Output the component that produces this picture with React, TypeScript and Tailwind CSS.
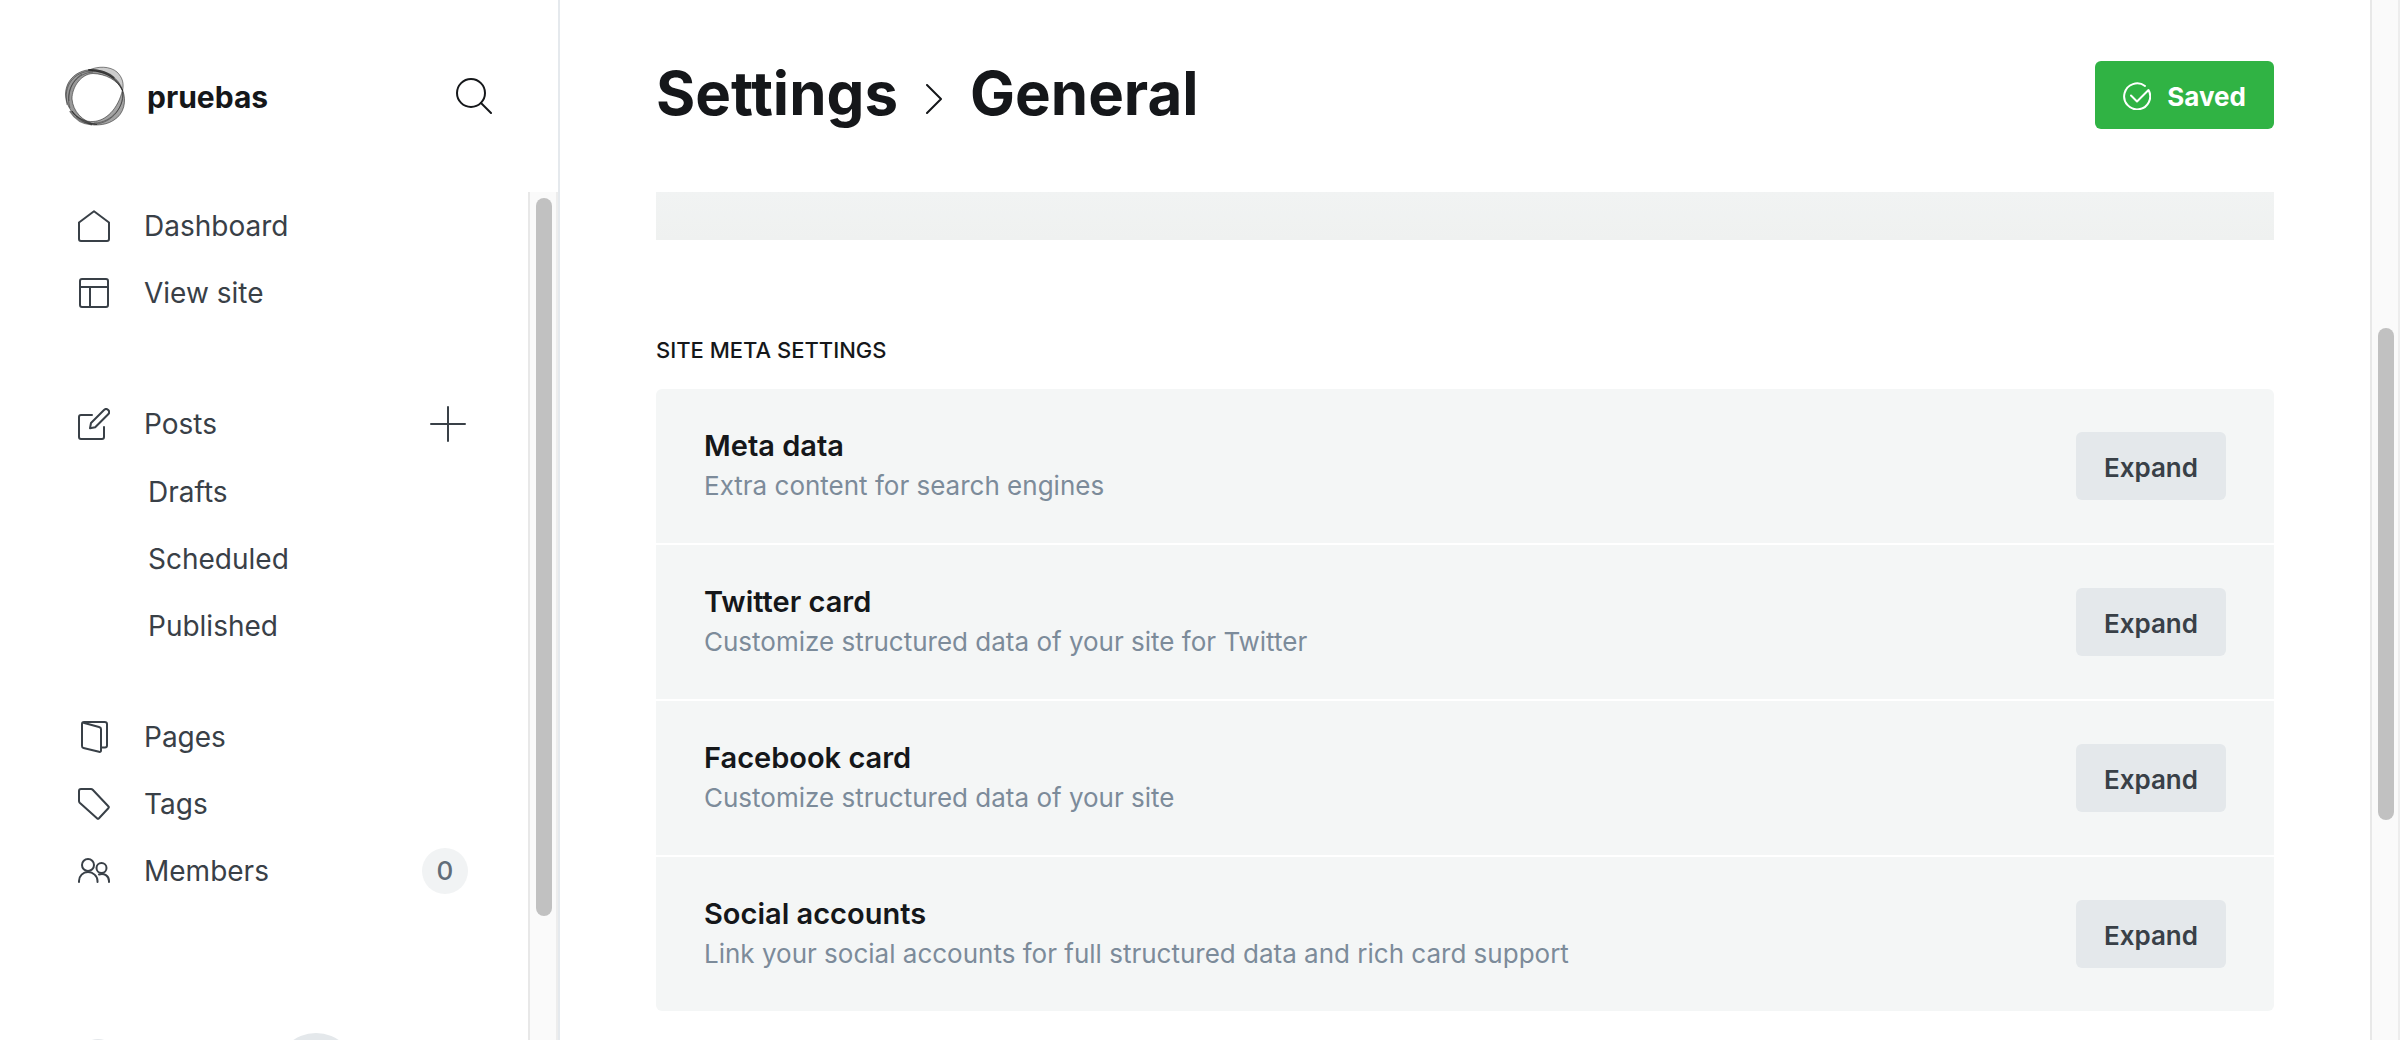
import type { ReactNode } from "react";

function Icon({ children, className = "size-8", box = 32 }: { children: ReactNode; className?: string; box?: number }) {
  return (
    <svg
      viewBox={`0 0 ${box} ${box}`}
      className={`shrink-0 ${className}`}
      fill="none"
      stroke="currentColor"
      strokeWidth="2"
      strokeLinecap="round"
      strokeLinejoin="round"
      aria-hidden="true"
    >
      {children}
    </svg>
  );
}

const icons = {
  house: <path d="M1 12.5 16 1.2l15 11.3V29a2 2 0 0 1-2 2H3a2 2 0 0 1-2-2z" />,
  layout: (
    <>
      <rect x="2" y="2" width="28" height="28" rx="2" />
      <path d="M2 10h28M12 10v20" />
    </>
  ),
  pencil: (
    <>
      <path d="M14 7H3a2 2 0 0 0-2 2v20a2 2 0 0 0 2 2h21a2 2 0 0 0 2-2V19" />
      <path d="M12 20.200l1-5.200L26 2a2.900 2.900 0 0 1 4.200 4.200l-13 13z" />
    </>
  ),
  pages: (
    <path d="M4.500 1.500 21 6q2 .5 2 2v21.500q0 1.800-2 1.300L5.500 27Q4 26.600 4 25V3q0-2 2-2h20.500Q29 1 29 3v21.500q0 2-2 2h-4" />
  ),
  tag: <path d="M3 1h10q1 0 1.700.7L30.300 18.300q1 1 0 2L21 30.300q-1 1-2 0L1.700 14.700Q1 14 1 13V3q0-2 2-2z" />,
  members: (
    <>
      <circle cx="10" cy="10" r="6" />
      <circle cx="23.500" cy="13" r="5" />
      <path d="M1 27v-1c0-5 4-9 9-9s9.500 4 9.500 9v1M21 19.500c5-2 10 1.500 10 6.500v1" />
    </>
  ),
};

function Logo() {
  return (
    <svg viewBox="0 0 62 62" className="size-[62px] shrink-0" fill="none" aria-hidden="true">
      <g fill="#333" stroke="#222" strokeOpacity="0.55" strokeWidth="1">
        <path
          fillOpacity="0.5"
          d="M33 59.500C16 58 2 46 1.500 29 2 14 14 4.500 29 4.500c13 .5 26 8.500 29.500 20.500C53 15 42 9 29 8.500 17 9 8 22 8 34c1 12 10 23 25 25.500z"
        />
        <path fillOpacity="0.25" d="M25 5c9-4 21-4 28 2 6 6 7 12 5.500 19C55 15 44 7 25 5z" />
        <path
          fillOpacity="0.45"
          d="M58.500 25C63 36 60 49 50 55c-6 4-12 5-20 5C22 59 12 54 8 46c6 8 14 11 21 10.500C42 56 54 44 58.500 25z"
        />
      </g>
      <g stroke="#222" strokeOpacity="0.45" strokeWidth="1">
        <path d="M3 40C-1 20 10 7 27 6c12 0 24 5 31 19" />
        <path d="M5 36C4 20 14 8 29 7" />
        <path d="M6 43C2 30 6 17 18 9" />
        <path d="M58.500 25C62 40 48 58 30 58" />
        <path d="M58.500 27C60 44 46 60 28 59" />
      </g>
      <path stroke="#222" strokeOpacity="0.6" strokeWidth="2" d="M24 5c12 0 20 2 26 8M6 46c5 8 12 13 22 13.500" />
    </svg>
  );
}

function NavItem({ icon, label, children }: { icon: ReactNode; label: string; children?: ReactNode }) {
  return (
    <div className="flex h-[67px] items-center pr-15">
      <a href="#" className="flex flex-1 items-center gap-[34px]">
        <Icon>{icon}</Icon>
        {label}
      </a>
      {children}
    </div>
  );
}

function SubItem({ label }: { label: string }) {
  return (
    <li>
      <a href="#" className="flex h-[67px] items-center pl-[70px]">
        {label}
      </a>
    </li>
  );
}

function Sidebar() {
  return (
    <aside className="flex w-[560px] shrink-0 flex-col border-r-2 border-[#e5e9ed]">
      <header className="flex h-48 shrink-0 items-center gap-[21px] pr-[66px] pl-16">
        <Logo />
        <span className="flex-1 pt-0.5 text-[30px] leading-8 font-bold text-[#15171a]">pruebas</span>
        <button type="button" aria-label="Search" className="text-[#15171a]">
          <Icon className="size-9" box={36}>
            <circle cx="15" cy="15" r="14" />
            <path d="m25 25 10 10" />
          </Icon>
        </button>
      </header>
      <div className="flex min-h-0 flex-1">
        <nav className="flex flex-1 flex-col overflow-hidden pl-[78px] text-[28px] text-[#394047]">
          <ul>
            <li>
              <NavItem icon={icons.house} label="Dashboard" />
            </li>
            <li>
              <NavItem icon={icons.layout} label="View site" />
            </li>
          </ul>
          <ul className="mt-16">
            <li>
              <NavItem icon={icons.pencil} label="Posts">
                <button type="button" aria-label="New post" className="flex size-10 items-center justify-center">
                  <Icon className="size-9" box={36}>
                    <path d="M18 1v34M1 18h34" />
                  </Icon>
                </button>
              </NavItem>
              <ul className="mt-px">
                <SubItem label="Drafts" />
                <SubItem label="Scheduled" />
                <SubItem label="Published" />
              </ul>
            </li>
          </ul>
          <ul className="mt-11">
            <li>
              <NavItem icon={icons.pages} label="Pages" />
            </li>
            <li>
              <NavItem icon={icons.tag} label="Tags" />
            </li>
            <li>
              <NavItem icon={icons.members} label="Members">
                <span className="flex size-[46px] items-center justify-center rounded-full bg-[#f1f3f4] text-[26px] font-medium text-[#626d79]">
                  0
                </span>
              </NavItem>
            </li>
          </ul>
          <div className="mt-[129px] flex shrink-0 items-start">
            <span className="mt-1.5 size-10 rounded-full bg-[#e4e8eb]" />
            <span className="ml-[158px] size-20 rounded-full bg-[#e4e8eb]" />
          </div>
        </nav>
        <Scrollbar before="grow-6" thumb="grow-[718]" after="grow-[124]" />
      </div>
    </aside>
  );
}

function Scrollbar({ before, thumb, after }: { before: string; thumb: string; after: string }) {
  return (
    <div
      aria-hidden="true"
      className="flex w-[30px] shrink-0 flex-col items-center border-l-2 border-[#e8e8e8] bg-[#fafafa] shadow-[inset_-2px_0_#ededed]"
    >
      <div className={before} />
      <div className={`w-4 rounded-full bg-[#c1c1c1] ${thumb}`} />
      <div className={after} />
    </div>
  );
}

const metaSettings = [
  { title: "Meta data", text: "Extra content for search engines" },
  { title: "Twitter card", text: "Customize structured data of your site for Twitter" },
  { title: "Facebook card", text: "Customize structured data of your site" },
  { title: "Social accounts", text: "Link your social accounts for full structured data and rich card support" },
];

function MetaRow({ title, text }: { title: string; text: string }) {
  return (
    <li className="flex items-center justify-between bg-[#f4f6f6] px-12 py-[37px]">
      <div>
        <h3 className="text-[29px] leading-10 font-semibold text-[#15171a]">{title}</h3>
        <p className="text-[26px] leading-10 text-[#7c8b9a]">{text}</p>
      </div>
      <button
        type="button"
        className="h-[68px] rounded-md bg-[#e4e8eb] px-7 pt-0.5 text-[26px] font-semibold text-[#394047]"
      >
        Expand
      </button>
    </li>
  );
}

export default function App() {
  return (
    <div className="flex h-screen overflow-hidden bg-white font-['Inter',sans-serif]">
      <Sidebar />
      <main className="flex min-w-0 flex-1 flex-col px-24">
        <header className="flex h-48 shrink-0 items-center justify-between pb-0.5">
          <h1 className="flex items-center gap-7 pb-1 text-[60px] leading-none font-bold text-[#15171a]">
            <a href="#">Settings</a>
            <svg
              viewBox="0 0 16 30"
              className="mt-3 h-[30px] w-4"
              fill="none"
              stroke="currentColor"
              strokeWidth="2"
              strokeLinecap="round"
              strokeLinejoin="round"
              aria-hidden="true"
            >
              <path d="m1 1 14 14L1 29" />
            </svg>
            General
          </h1>
          <button
            type="button"
            className="flex h-[68px] items-center gap-4 rounded-md bg-[#30b344] px-7 pt-0.5 text-[26px] font-bold text-white"
          >
            <svg
              viewBox="0 0 28 28"
              className="size-7"
              fill="none"
              stroke="currentColor"
              strokeWidth="2"
              strokeLinecap="round"
              strokeLinejoin="round"
              aria-hidden="true"
            >
              <path d="M22 4A13 13 0 1 0 25.500 8L14 19.500l-6-6" />
            </svg>
            Saved
          </button>
        </header>
        <div className="h-12 shrink-0 bg-linear-to-b from-[#f1f3f3] to-[#eff1f0]" />
        <section className="pt-24">
          <h2 className="text-[22px] leading-7 font-medium text-[#15171a] uppercase">Site meta settings</h2>
          <ul className="mt-[25px] flex flex-col gap-0.5 overflow-hidden rounded-md">
            {metaSettings.map((item) => (
              <MetaRow key={item.title} {...item} />
            ))}
          </ul>
        </section>
      </main>
      <Scrollbar before="grow-[328]" thumb="grow-[492]" after="grow-[220]" />
    </div>
  );
}
